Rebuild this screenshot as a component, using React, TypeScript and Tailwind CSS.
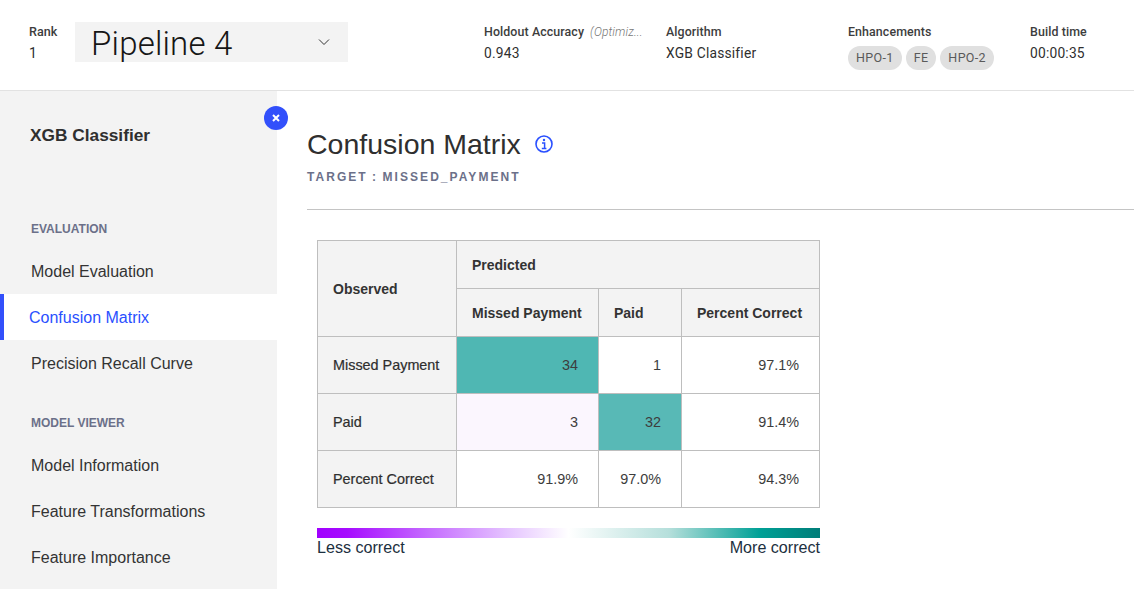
import React from "react";

const th = "border border-[#bebebe] bg-[#f3f3f3] text-left align-middle pl-[15px] pt-[2px] text-[14px] font-bold text-[#333333] p-0";
const rowHead = "border border-[#bebebe] bg-[#f3f3f3] text-left align-middle pl-[15px] pt-[2px] text-[14.4px] font-normal text-[#2e2e2e] [-webkit-text-stroke:0.2px_#2e2e2e] p-0";
const td = "border border-[#bebebe] text-right align-middle pr-[20px] pt-[2px] text-[14.4px] text-[#3d3d3d] p-0";
const plex = "font-['Roboto','Noto_Sans',sans-serif]";

function Meta({ label, value, note }: { label: string; value?: string; note?: string }) {
  return (
    <div className="w-[182px] shrink-0">
      <div className="flex items-baseline h-[18px] text-[12.4px] font-medium tracking-[0.1px] text-[#3d3d3d]">
        <span>{label}</span>
        {note && <span className="ml-[6px] font-light italic text-[#777777] text-[12px]">{note}</span>}
      </div>
      {value && <div className="mt-[2px] text-[13.8px] leading-[20px] text-[#2f2f2f] tracking-[0.2px]">{value}</div>}
    </div>
  );
}

function Chip({ children }: { children: React.ReactNode }) {
  return (
    <span className="h-[24px] px-[8px] rounded-full bg-[#e0e0e0] text-[12.5px] text-[#5a5a5a] flex items-center tracking-[0.35px]">
      {children}
    </span>
  );
}

function NavItem({ children, active }: { children: React.ReactNode; active?: boolean }) {
  return active ? (
    <div className="h-[46px] pt-[2px] flex items-center bg-white border-l-[4px] border-[#3250fb] pl-[25px] text-[16px] text-[#2a50ff]">
      {children}
    </div>
  ) : (
    <div className="h-[46px] pt-[2px] flex items-center pl-[31px] text-[16px] text-[#333333]">{children}</div>
  );
}

function SectionLabel({ children }: { children: React.ReactNode }) {
  return <div className="h-[20px] pt-[2px] flex items-center pl-[31px] text-[12px] font-bold text-[#6b7089]">{children}</div>;
}

export default function App() {
  return (
    <div className="w-[1134px] h-[589px] overflow-hidden bg-white font-['Liberation_Sans',Arial,sans-serif] flex flex-col">
      <header className={`h-[91px] shrink-0 border-b border-[#e2e2e2] flex pl-[29px] ${plex}`}>
        <div className="w-[46px] shrink-0 pt-[23px]">
          <div className="h-[18px] text-[12.6px] font-medium text-[#3d3d3d] flex items-center">Rank</div>
          <div className="mt-[2px] text-[14px] leading-[20px] text-[#2f2f2f]">1</div>
        </div>
        <div className="mt-[22px] w-[273px] h-[40px] bg-[#f3f3f3] flex items-center justify-between pl-[16px] pr-[18px] shrink-0">
          <span className="text-[33px] pt-[3px] font-light leading-[40px] text-[#161616] tracking-[0.2px]">Pipeline 4</span>
          <svg width="12" height="8" viewBox="0 0 12 8" fill="none" stroke="#333333" strokeWidth="1">
            <path d="M1 1.5 L6 6.5 L11 1.5" />
          </svg>
        </div>
        <div className="ml-[136px] flex pt-[23px]">
          <Meta label="Holdout Accuracy" note="(Optimiz..." value="0.943" />
          <Meta label="Algorithm" value="XGB Classifier" />
          <div className="w-[182px] shrink-0">
            <div className="h-[18px] flex items-center text-[12.4px] font-medium tracking-[0.1px] text-[#3d3d3d]">Enhancements</div>
            <div className="flex gap-[4px] mt-[5px]">
              <Chip>HPO-1</Chip>
              <Chip>FE</Chip>
              <Chip>HPO-2</Chip>
            </div>
          </div>
          <Meta label="Build time" value="00:00:35" />
        </div>
      </header>

      <div className="flex flex-1 min-h-0">
        <aside className="relative w-[277px] shrink-0 bg-[#f3f3f3]">
          <button className="absolute left-[264px] top-[15px] w-[24px] h-[24px] rounded-full bg-[#3250fb] flex items-center justify-center">
            <svg width="8" height="8" viewBox="0 0 8 8" stroke="white" strokeWidth="2" fill="none">
              <path d="M1 1 L7 7 M7 1 L1 7" />
            </svg>
          </button>
          <div className="pl-[30px] pt-[33px] h-[127px] text-[17.3px] leading-[22px] font-bold text-[#2f2f2f]">XGB Classifier</div>
          <SectionLabel>EVALUATION</SectionLabel>
          <div className="mt-[10px]">
            <NavItem>Model Evaluation</NavItem>
            <NavItem active>Confusion Matrix</NavItem>
            <NavItem>Precision Recall Curve</NavItem>
          </div>
          <div className="mt-[26px]">
            <SectionLabel>MODEL VIEWER</SectionLabel>
          </div>
          <div className="mt-[10px]">
            <NavItem>Model Information</NavItem>
            <NavItem>Feature Transformations</NavItem>
            <NavItem>Feature Importance</NavItem>
          </div>
        </aside>

        <main className="flex-1 min-w-0 pl-[30px]">
          <div className="h-[119px] border-b border-[#c4c4c4]">
            <div className="pt-[35px] flex items-center">
              <h1 className="text-[28.5px] leading-[36px] font-normal text-[#2f2f2f]">Confusion Matrix</h1>
              <svg className="ml-[13px]" width="20" height="20" viewBox="0 0 20 20" fill="none">
                <circle cx="10" cy="10" r="8" stroke="#2a50ff" strokeWidth="1.6" />
                <circle cx="10" cy="6" r="1.2" fill="#2a50ff" />
                <path d="M8 9 H10.6 V14 M7.8 14.4 H12.4" stroke="#2a50ff" strokeWidth="1.5" />
              </svg>
            </div>
            <div className="mt-[7px] text-[12px] leading-[16px] font-bold tracking-[2.05px] [word-spacing:-1px] text-[#6b7089]">TARGET : MISSED_PAYMENT</div>
          </div>

          <div className="ml-[10px] mt-[30px] w-[503px]">
            <table className="border-collapse table-fixed w-[502px]">
              <colgroup>
                <col className="w-[139px]" />
                <col className="w-[142px]" />
                <col className="w-[83px]" />
                <col className="w-[138px]" />
              </colgroup>
              <thead>
                <tr className="h-[48px]">
                  <th rowSpan={2} className={th}>Observed</th>
                  <th colSpan={3} className={th}>Predicted</th>
                </tr>
                <tr className="h-[48px]">
                  <th className={th}>Missed Payment</th>
                  <th className={th}>Paid</th>
                  <th className={th}>Percent Correct</th>
                </tr>
              </thead>
              <tbody>
                <tr className="h-[57px]">
                  <th className={rowHead}>Missed Payment</th>
                  <td className={`${td} bg-[#4fb7b3]`}>34</td>
                  <td className={td}>1</td>
                  <td className={td}>97.1%</td>
                </tr>
                <tr className="h-[57px]">
                  <th className={rowHead}>Paid</th>
                  <td className={`${td} bg-[#fbf6fe]`}>3</td>
                  <td className={`${td} bg-[#58b9b6]`}>32</td>
                  <td className={td}>91.4%</td>
                </tr>
                <tr className="h-[57px]">
                  <th className={rowHead}>Percent Correct</th>
                  <td className={td}>91.9%</td>
                  <td className={td}>97.0%</td>
                  <td className={td}>94.3%</td>
                </tr>
              </tbody>
            </table>
            <div className="mt-[20px] h-[10px] bg-[linear-gradient(to_right,#a100ff_0%,#a60cff_6%,#c56bff_22%,#e5c4ff_38%,#ffffff_50%,#b5dfdb_70%,#00a096_88%,#007d79_100%)]" />
            <div className="flex justify-between text-[16.1px] leading-[19px] text-[#1c3040]">
              <span>Less correct</span>
              <span>More correct</span>
            </div>
          </div>
        </main>
      </div>
    </div>
  );
}
